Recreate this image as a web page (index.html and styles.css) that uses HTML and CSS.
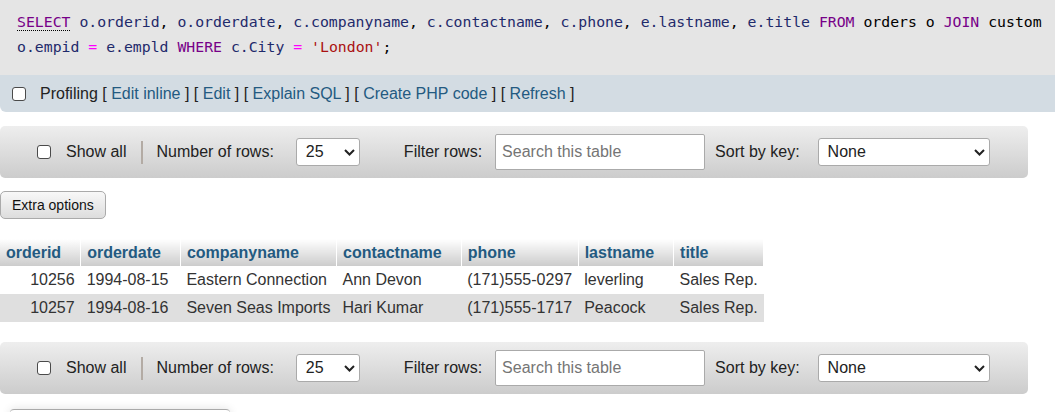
FILE: index.html
```html
<!DOCTYPE html>
<html lang="en">
<head>
<meta charset="utf-8">
<title>SQL result</title>
<link rel="stylesheet" href="styles.css">
</head>
<body>
<div class="sql">
  <div class="line"><span class="kw select-kw">SELECT</span> <span class="v">o.orderid</span>, <span class="v">o.orderdate</span>, <span class="v">c.companyname</span>, <span class="v">c.contactname</span>, <span class="v">c.phone</span>, <span class="v">e.lastname</span>, <span class="v">e.title</span> <span class="kw">FROM</span> orders o <span class="kw">JOIN</span> custom</div>
  <div class="line"><span class="v">o.empid</span> <span class="op">=</span> <span class="v">e.empld</span> <span class="kw">WHERE</span> <span class="v">c.City</span> <span class="op">=</span> <span class="str">'London'</span>;</div>
</div>

<div class="profiling">
  <input type="checkbox" class="check">
  <span>Profiling [ <a href="#">Edit inline</a> ] [ <a href="#">Edit</a> ] [ <a href="#">Explain SQL</a> ] [ <a href="#">Create PHP code</a> ] [ <a href="#">Refresh</a> ]</span>
</div>

<div class="nav">
  <input type="checkbox" class="check">
  <span class="showall">Show all</span>
  <span class="sep"></span>
  <span class="rows-label">Number of rows:</span>
  <div class="select rows-select"><span>25</span><svg width="11" height="7" viewBox="0 0 11 7"><path d="M1 1l4.5 4.5L10 1" fill="none" stroke="#222" stroke-width="2"/></svg></div>
  <span class="filter-label">Filter rows:</span>
  <input class="search" type="text" placeholder="Search this table">
  <span class="sort-label">Sort by key:</span>
  <div class="select sort-select"><span>None</span><svg width="11" height="7" viewBox="0 0 11 7"><path d="M1 1l4.5 4.5L10 1" fill="none" stroke="#222" stroke-width="2"/></svg></div>
</div>

<button class="extra">Extra options</button>

<table class="data">
  <thead>
    <tr><th>orderid</th><th>orderdate</th><th>companyname</th><th>contactname</th><th>phone</th><th>lastname</th><th>title</th></tr>
  </thead>
  <tbody>
    <tr><td class="num">10256</td><td>1994-08-15</td><td>Eastern Connection</td><td>Ann Devon</td><td>(171)555-0297</td><td>leverling</td><td>Sales Rep.</td></tr>
    <tr><td class="num">10257</td><td>1994-08-16</td><td>Seven Seas Imports</td><td>Hari Kumar</td><td>(171)555-1717</td><td>Peacock</td><td>Sales Rep.</td></tr>
  </tbody>
</table>

<div class="nav nav-bottom">
  <input type="checkbox" class="check">
  <span class="showall">Show all</span>
  <span class="sep"></span>
  <span class="rows-label">Number of rows:</span>
  <div class="select rows-select"><span>25</span><svg width="11" height="7" viewBox="0 0 11 7"><path d="M1 1l4.5 4.5L10 1" fill="none" stroke="#222" stroke-width="2"/></svg></div>
  <span class="filter-label">Filter rows:</span>
  <input class="search" type="text" placeholder="Search this table">
  <span class="sort-label">Sort by key:</span>
  <div class="select sort-select"><span>None</span><svg width="11" height="7" viewBox="0 0 11 7"><path d="M1 1l4.5 4.5L10 1" fill="none" stroke="#222" stroke-width="2"/></svg></div>
</div>

<div class="ops"></div>
</body>
</html>
```

FILE: styles.css
```css
html, body {
  margin: 0;
  padding: 0;
  overflow: hidden;
}
body {
  width: 1055px;
  height: 412px;
  font-family: "Liberation Sans", Arial, sans-serif;
  font-size: 16px;
  color: #333;
  background: #fff;
}

/* SQL box */
.sql {
  background: #e5e5e5;
  height: 75px;
  box-sizing: border-box;
  padding: 9px 0 0 17px;
  overflow: hidden;
}
.line {
  font-family: "DejaVu Sans Mono", "Liberation Mono", monospace;
  font-size: 14.8px;
  line-height: 25px;
  white-space: pre;
  color: #000;
}
.kw { color: #770088; }
.select-kw { border-bottom: 1px dotted #000; }
.v { color: #1f2a6b; }
.op { color: #ff00ff; }
.str { color: #aa1111; }

/* Profiling bar */
.profiling {
  background: #d3dce3;
  height: 37px;
  box-sizing: border-box;
  display: flex;
  align-items: center;
  padding-left: 12px;
  border-radius: 0 0 0 6px;
  color: #222;
}
.profiling a {
  color: #235a81;
  text-decoration: none;
}
.check {
  appearance: none;
  -webkit-appearance: none;
  width: 14px;
  height: 14px;
  margin: 0;
  border: 1px solid #4a4a4a;
  border-radius: 3px;
  background: #fff;
  box-sizing: border-box;
  flex: none;
}
.profiling .check { margin-right: 14px; }

/* Navigation bar */
.nav {
  margin: 14px 27px 0 0;
  height: 52px;
  box-sizing: border-box;
  background: linear-gradient(#eeeeee, #cccccc);
  border-radius: 5px;
  display: flex;
  align-items: center;
  padding-left: 37px;
  color: #222;
}
.nav-bottom { margin-top: 20px; }
.showall { margin-left: 15px; }
.sep {
  width: 2px;
  height: 23px;
  margin-left: 15px;
  background: #b3aba4;
}
.rows-label { margin-left: 13px; }
.select {
  height: 28px;
  box-sizing: border-box;
  border: 1px solid #aaa;
  border-radius: 3px;
  background: #fff;
  display: flex;
  align-items: center;
  justify-content: space-between;
  padding: 0 4px 0 9px;
  color: #222;
}
.rows-select {
  width: 64px;
  margin-left: 22px;
}
.sort-select {
  width: 172px;
  margin-left: 18px;
}
.filter-label { margin-left: 44px; }
.search {
  margin-left: 13px;
  width: 210px;
  height: 36px;
  box-sizing: border-box;
  border: 1px solid #aaa;
  border-radius: 2px;
  padding: 0 6px;
  font-family: "Liberation Sans", Arial, sans-serif;
  font-size: 16px;
  color: #222;
  background: #fff;
}
.search::placeholder { color: #757575; }
.sort-label { margin-left: 10px; }

/* Extra options */
.extra {
  display: block;
  margin: 13px 0 0 0;
  height: 28px;
  padding: 0 11px;
  border: 1px solid #aaa;
  border-radius: 5px;
  background: linear-gradient(#f8f8f8, #dddddd);
  font-family: "Liberation Sans", Arial, sans-serif;
  font-size: 14px;
  color: #111;
}

/* Results table */
.data {
  margin-top: 20px;
  border-collapse: collapse;
}
.data th {
  background: linear-gradient(#ffffff, #cccccc);
  color: #235a81;
  font-weight: bold;
  text-align: left;
  padding: 4px 19px 4px 6px;
  line-height: 19px;
  border-right: 1px solid #fff;
  white-space: nowrap;
}
.data td {
  padding: 4px 6px;
  line-height: 20px;
  color: #333;
  white-space: nowrap;
}
.data tbody tr:nth-child(even) td { background: #dfdfdf; }
.data td.num { text-align: right; }

/* Next box, partly visible */
.ops {
  margin: 15px 0 0 10px;
  width: 220px;
  height: 30px;
  border-top: 1px solid #aaa;
  border-radius: 4px 4px 0 0;
  box-shadow: 0 0 10px rgba(0, 0, 0, 0.12);
}
```
